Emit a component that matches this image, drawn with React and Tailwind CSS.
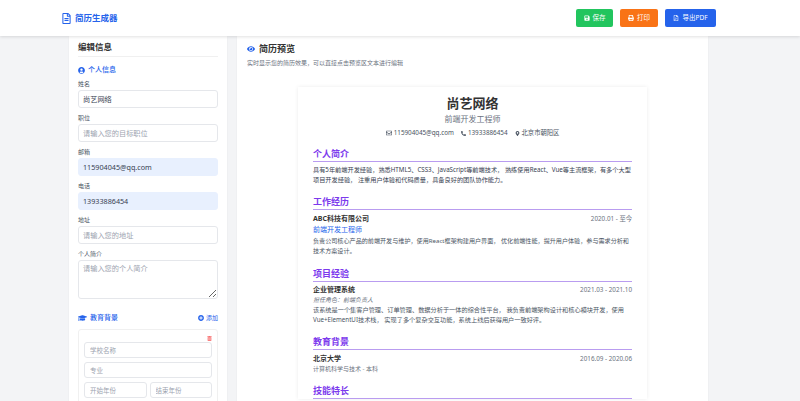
import { FaRegFileAlt, FaSave, FaPrint, FaRegFilePdf, FaUserCircle, FaGraduationCap, FaPlusCircle, FaTrashAlt, FaEye, FaRegEnvelope, FaPhoneAlt, FaMapMarkerAlt } from "react-icons/fa";

const inputCls =
  "block w-full h-[18px] rounded-[3px] border border-[#e5e7eb] px-[4px] text-[7.2px] text-[#374151] placeholder:text-[#9ca3af] outline-none";
const smallInputCls =
  "block w-full min-w-0 h-[16px] rounded-[3px] border border-[#e5e7eb] bg-white px-[5px] text-[6.5px] placeholder:text-[#9ca3af] outline-none";

function Field({ label, value, placeholder, filled }) {
  return (
    <div className="mb-[4px]">
      <div className="h-[12px] text-[6px] leading-[12px] text-[#4b5563]">{label}</div>
      <input
        readOnly
        value={value ?? ""}
        placeholder={placeholder}
        className={`${inputCls} ${filled ? "border-[#e8f0fe] bg-[#e8f0fe]" : "bg-white"}`}
      />
    </div>
  );
}

function Section({ title, children, className = "" }) {
  return (
    <section className={className}>
      <h3 className="border-b border-[#b99cf0] text-[9px] font-bold leading-[15px] text-[#7c3aed]">{title}</h3>
      {children}
    </section>
  );
}

function Entry({ name, date, className = "" }) {
  return (
    <div className={`flex items-center justify-between leading-[10px] ${className}`}>
      <span className="text-[7px] font-bold text-[#333333]">{name}</span>
      <span className="text-[6.3px] text-[#6b7280]">{date}</span>
    </div>
  );
}

export default function App() {
  return (
    <div className="h-screen overflow-hidden bg-[#f3f4f6] font-['Noto_Sans','Noto_Sans_CJK_SC',sans-serif]">
      <header className="relative z-10 flex h-[36px] items-center justify-between bg-white pl-[62px] pr-[84px] shadow-[0_1px_3px_rgba(0,0,0,0.12)]">
        <div className="flex items-center gap-[4px] text-[#2563eb]">
          <FaRegFileAlt className="h-[11px] w-[9px]" />
          <span className="text-[8.5px] font-bold">简历生成器</span>
        </div>
        <div className="flex gap-[7px] text-[6.5px] text-white">
          <button className="flex h-[18px] w-[37px] items-center justify-center gap-[3px] rounded-[2px] bg-[#22c55e]">
            <FaSave className="h-[6px] w-[6px]" />
            保存
          </button>
          <button className="flex h-[18px] w-[38px] items-center justify-center gap-[3px] rounded-[2px] bg-[#f97316]">
            <FaPrint className="h-[6px] w-[6px]" />
            打印
          </button>
          <button className="flex h-[18px] w-[51px] items-center justify-center gap-[3px] rounded-[2px] bg-[#2563eb]">
            <FaRegFilePdf className="h-[6px] w-[6px]" />
            导出PDF
          </button>
        </div>
      </header>

      <main className="flex gap-[10px] pl-[69px]">
        <aside className="w-[158px] shrink-0 bg-white px-[9px] pt-[4px] shadow-[0_1px_2px_rgba(0,0,0,0.05)]">
          <h2 className="border-b border-[#f0f0f0] pb-[2px] text-[8.5px] font-bold leading-[14px] text-[#333333]">编辑信息</h2>
          <div className="mt-[8px] flex h-[10px] items-center gap-[3px] text-[7px] font-medium text-[#2563eb]">
            <FaUserCircle className="h-[7px] w-[7px]" />
            个人信息
          </div>
          <div className="mt-[3px]">
            <Field label="姓名" value="尚艺网络" />
            <Field label="职位" placeholder="请输入您的目标职位" />
            <Field label="邮箱" value="115904045@qq.com" filled />
            <Field label="电话" value="13933886454" filled />
            <Field label="地址" placeholder="请输入您的地址" />
            <div>
              <div className="h-[12px] text-[6px] leading-[12px] text-[#4b5563]">个人简介</div>
              <textarea
                readOnly
                placeholder="请输入您的个人简介"
                className="block h-[39px] w-full rounded-[3px] border border-[#e5e7eb] px-[4px] py-[2px] text-[7.2px] placeholder:text-[#9ca3af] outline-none"
              />
            </div>
          </div>
          <div className="mt-[13px] flex h-[12px] items-center justify-between text-[#2563eb]">
            <span className="flex items-center gap-[3px] text-[7px] font-medium">
              <FaGraduationCap className="h-[8px] w-[9px]" />
              教育背景
            </span>
            <span className="flex items-center gap-[2px] text-[6px]">
              <FaPlusCircle className="h-[6px] w-[6px]" />
              添加
            </span>
          </div>
          <div className="mt-[5px] rounded-[3px] border border-[#f0f0f0] px-[5px] pb-[5px] pt-[6px]">
            <div className="flex h-[5px] justify-end">
              <FaTrashAlt className="h-[5px] w-[5px] text-[#f87171]" />
            </div>
            <div className="flex flex-col gap-[4px] pt-[1px]">
              <input readOnly placeholder="学校名称" className={smallInputCls} />
              <input readOnly placeholder="专业" className={smallInputCls} />
              <div className="flex gap-[3px]">
                <input readOnly placeholder="开始年份" className={smallInputCls} />
                <input readOnly placeholder="结束年份" className={smallInputCls} />
              </div>
            </div>
          </div>
        </aside>

        <div className="w-[471px] shrink-0 bg-white shadow-[0_1px_2px_rgba(0,0,0,0.05)]">
          <div className="px-[10px] pt-[6px]">
            <h2 className="flex h-[14px] items-center gap-[4px] text-[9px] font-bold text-[#333333]">
              <FaEye className="h-[8px] w-[8px] text-[#2563eb]" />
              简历预览
            </h2>
            <p className="mt-[3px] text-[6px] leading-[8px] text-[#6b7280]">实时显示您的简历效果，可以直接点击预览区文本进行编辑</p>
          </div>
          <article className="mx-auto mt-[20px] w-[349px] bg-white px-[15px] pt-[7px] shadow-[0_0_4px_rgba(0,0,0,0.08)]">
            <div className="text-center">
              <h1 className="text-[13px] font-bold leading-[18px] text-[#333333]">尚艺网络</h1>
              <p className="mt-[1px] text-[8px] leading-[11px] text-[#6b7280]">前端开发工程师</p>
              <div className="mt-[3px] flex items-center justify-center gap-[7px] text-[6.3px] leading-[12px] text-[#4b5563]">
                <span className="flex items-center gap-[2px]"><FaRegEnvelope className="h-[6px] w-[6px]" />115904045@qq.com</span>
                <span className="flex items-center gap-[2px]"><FaPhoneAlt className="h-[5px] w-[5px]" />13933886454</span>
                <span className="flex items-center gap-[2px]"><FaMapMarkerAlt className="h-[5px] w-[5px]" />北京市朝阳区</span>
              </div>
            </div>

            <Section title="个人简介" className="mt-[7px]">
              <p className="mt-[3px] text-[6.2px] leading-[10px] text-[#374151]">
                具有5年前端开发经验，熟悉HTML5、CSS3、JavaScript等前端技术， 熟练使用React、Vue等主流框架，有多个大型项目开发经验， 注重用户体验和代码质量，具备良好的团队协作能力。
              </p>
            </Section>

            <Section title="工作经历" className="mt-[9px]">
              <Entry name="ABC科技有限公司" date="2020.01 - 至今" className="mt-[4px]" />
              <div className="text-[7px] leading-[11px] text-[#2563eb]">前端开发工程师</div>
              <p className="mt-[1px] text-[6.1px] leading-[10px] text-[#4b5563]">
                负责公司核心产品的前端开发与维护，使用React框架构建用户界面， 优化前端性能，提升用户体验，参与需求分析和技术方案设计。
              </p>
            </Section>

            <Section title="项目经验" className="mt-[10px]">
              <Entry name="企业管理系统" date="2021.03 - 2021.10" className="mt-[3px]" />
              <div className="mt-[1px] text-[6px] italic leading-[8px] text-[#6b7280]">担任角色：前端负责人</div>
              <p className="mt-[1px] text-[6.2px] leading-[10px] text-[#4b5563]">
                该系统是一个集客户管理、订单管理、数据分析于一体的综合性平台， 我负责前端架构设计和核心模块开发，使用Vue+ElementUI技术栈， 实现了多个复杂交互功能，系统上线后获得用户一致好评。
              </p>
            </Section>

            <Section title="教育背景" className="mt-[9px]">
              <Entry name="北京大学" date="2016.09 - 2020.06" className="mt-[4px]" />
              <div className="text-[6px] leading-[10px] text-[#6b7280]">计算机科学与技术 - 本科</div>
            </Section>

            <Section title="技能特长" className="mt-[9px]" />
          </article>
        </div>
      </main>
    </div>
  );
}
